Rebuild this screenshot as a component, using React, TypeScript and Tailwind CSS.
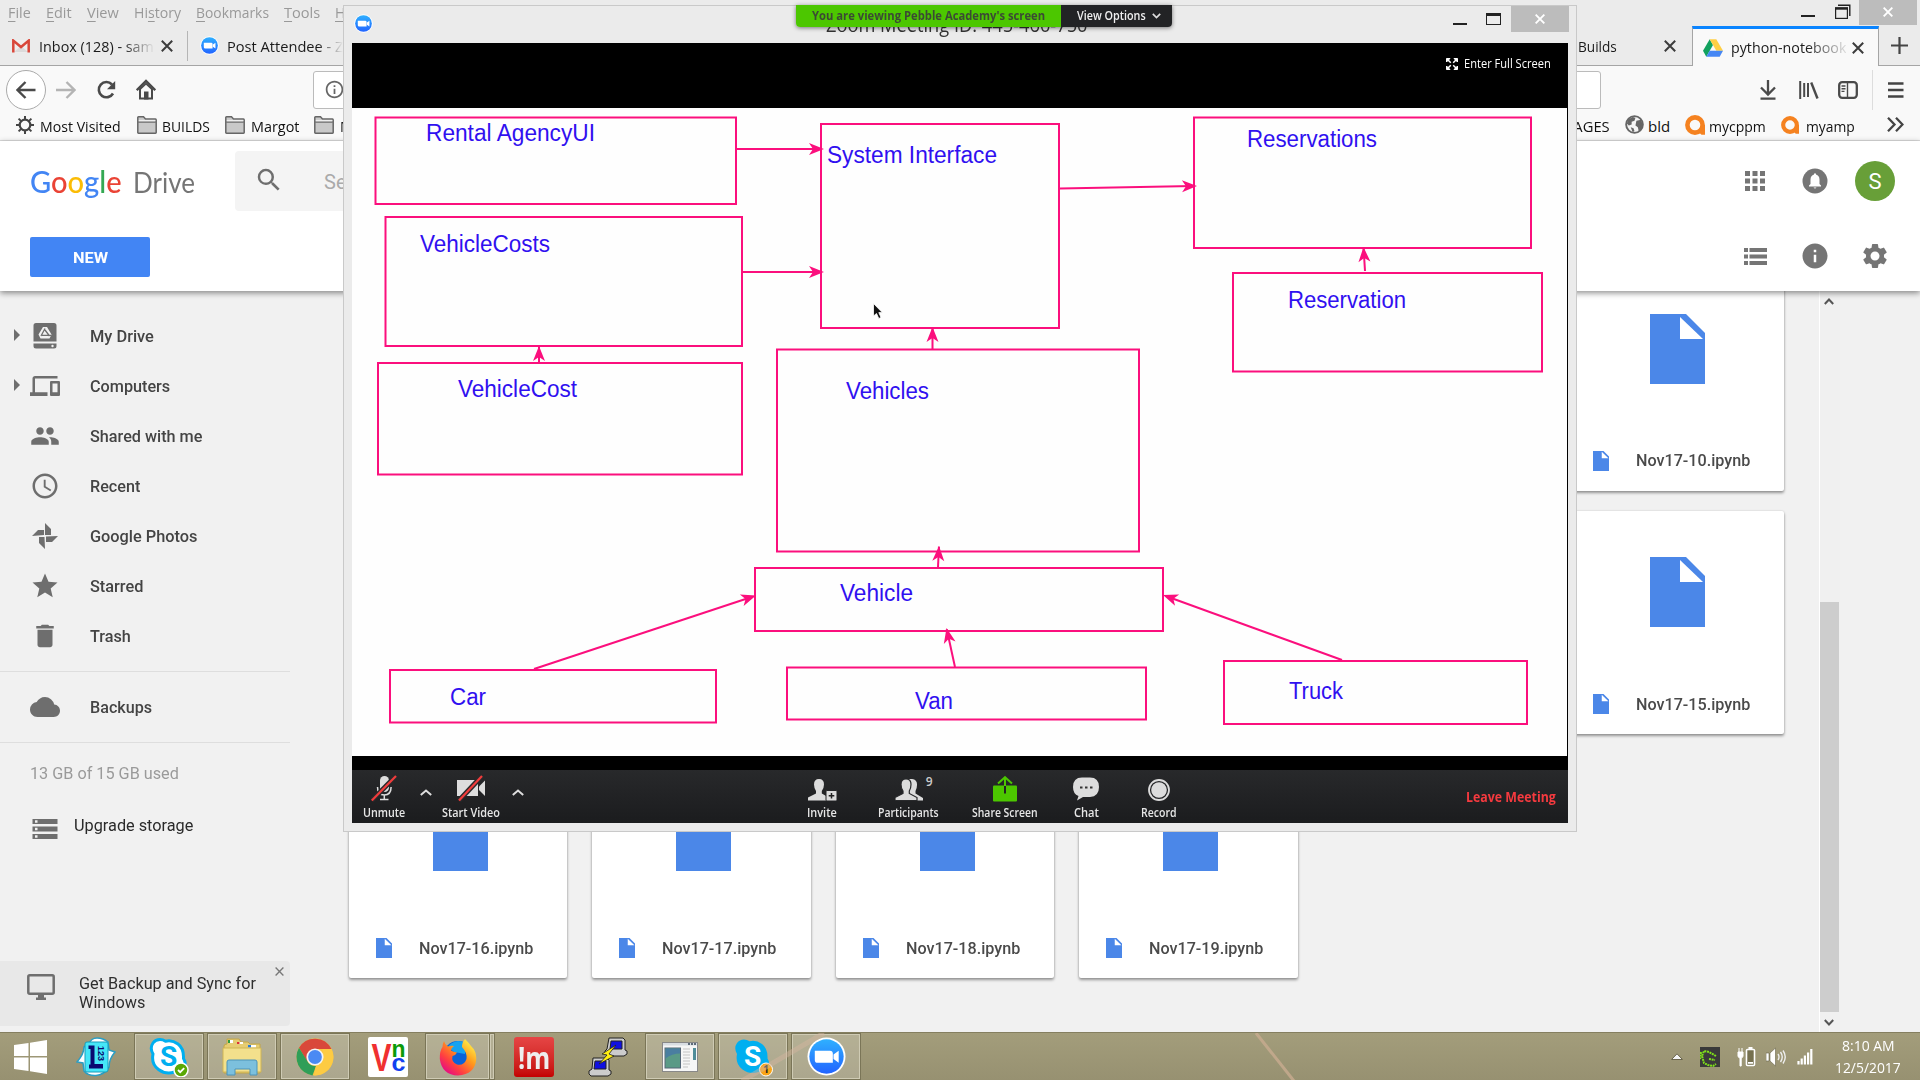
import { useLayoutEffect, useRef, type ReactNode } from "react";
import {
  MdDevices,
  MdPeople,
  MdAccessTime,
  MdStar,
  MdDelete,
  MdCloud,
  MdStorage,
  MdSearch,
  MdApps,
  MdInfo,
  MdSettings,
  MdInfoOutline,
} from "react-icons/md";

/* Single-line label whose text is condensed or widened to an exact width. */
function Fit({ w, className = "", children }: { w: number; className?: string; children: ReactNode }) {
  const ref = useRef<HTMLSpanElement>(null);
  useLayoutEffect(() => {
    const el = ref.current;
    if (!el) return;
    const apply = () => {
      el.style.transform = "none";
      const natural = el.offsetWidth;
      if (natural) el.style.transform = `scaleX(${w / natural})`;
    };
    apply();
    document.fonts?.ready.then(apply);
  }, [w]);
  return (
    <span className={`block shrink-0 whitespace-nowrap ${className}`} style={{ width: w }}>
      <span ref={ref} className="inline-block origin-left">
        {children}
      </span>
    </span>
  );
}

function Cross({ size = 12, stroke = "#3c3c3c", width = 2 }: { size?: number; stroke?: string; width?: number }) {
  return (
    <svg width={size} height={size} viewBox="0 0 12 12" className="shrink-0">
      <path d="M.8.8 11.2 11.2M11.2.8.8 11.2" stroke={stroke} strokeWidth={width} fill="none" />
    </svg>
  );
}

function ZoomLogo({ size }: { size: number }) {
  return (
    <svg width={size} height={size} viewBox="0 0 40 40" className="shrink-0">
      <defs>
        <linearGradient id="zg" x1="0" y1="0" x2="0" y2="1">
          <stop offset="0" stopColor="#2fb0ff" />
          <stop offset="1" stopColor="#2264ff" />
        </linearGradient>
      </defs>
      <circle cx="20" cy="20" r="19.500" fill="#fff" />
      <circle cx="20" cy="20" r="17.600" fill="url(#zg)" />
      <path d="M8 14h15.500a3 3 0 0 1 3 3v9.500H11a3 3 0 0 1-3-3zM27.200 18l5.300-4v12.500l-5.300-4z" fill="#fff" />
    </svg>
  );
}

function GmailLogo() {
  return (
    <svg width="18" height="14" viewBox="0 0 18 14" className="shrink-0">
      <rect x="1" y="1" width="16" height="12.500" fill="#f0eeee" />
      <path d="M2 13 9 7l7 6z" fill="#dcdada" />
      <path d="M1.300 13.500V1.600L9 8l7.700-6.400v11.900" stroke="#d9473a" strokeWidth="2.500" fill="none" />
    </svg>
  );
}

function DriveLogo() {
  return (
    <svg width="20" height="18" viewBox="0 0 20 17.500" className="shrink-0">
      <path d="M6.700 0 0 11.500l3.300 6L10 5.800z" fill="#11a15e" />
      <path d="M6.700 0h6.600L20 11.500h-6.700z" fill="#ffcf44" />
      <path d="M3.300 17.500 6.600 11.500H20l-3.300 6z" fill="#4687f4" />
    </svg>
  );
}

function Folder() {
  return (
    <svg width="20" height="18" viewBox="0 0 20 18" className="shrink-0">
      <path d="M.8 16.500V1.500Q.8.8 1.500.8H6.500L8.500 3H18.500Q19.200 3 19.200 4V16.500Q19.200 17.200 18.500 17.200H1.500Q.8 17.200.8 16.500Z" fill="#c9c9c9" stroke="#666" strokeWidth="1.500" />
      <path d="M1 6.200H19" stroke="#777" strokeWidth="1.300" />
      <path d="M1.800 4.500H18.300" stroke="#eee" strokeWidth="1.200" />
    </svg>
  );
}

function ArubaLogo({ size }: { size: number }) {
  return (
    <svg width={size} height={size} viewBox="0 0 20 20" className="shrink-0">
      <circle cx="10" cy="10" r="7.600" fill="none" stroke="#f58220" strokeWidth="4.600" />
      <path d="M16 10h4v9.800h-3.500L13.500 17z" fill="#f58220" />
    </svg>
  );
}

function FileShape({ w, h }: { w: number; h: number }) {
  return (
    <svg width={w} height={h} viewBox="0 0 55 70" preserveAspectRatio="none" className="shrink-0">
      <path d="M0 0H36L55 19V70H0Z" fill="#4b87e8" />
      <path d="M30 3V25H53Z" fill="#fff" />
    </svg>
  );
}

/* ------------------------------------------------------------------ Browser */

function MenuBar() {
  const items: [number, ReactNode][] = [
    [23, <><u>F</u>ile</>],
    [26, <><u>E</u>dit</>],
    [32, <><u>V</u>iew</>],
    [47, <>Hi<u>s</u>tory</>],
    [73, <><u>B</u>ookmarks</>],
    [36, <><u>T</u>ools</>],
    [30, <><u>H</u>elp</>],
  ];
  return (
    <div className="flex h-[26px] shrink-0 items-start gap-[15px] pl-2">
      {items.map(([w, label], i) => (
        <Fit key={i} w={w} className="text-[15px] leading-[25px] text-[#999] [&_u]:underline-offset-[3px]">
          {label}
        </Fit>
      ))}
      <div className="ml-auto flex items-start">
        <div className="mt-[15px] mr-[20px] h-[2px] w-[14px] bg-[#222]" />
        <svg width="16" height="16" viewBox="0 0 16 16" className="mt-[4px] mr-[8px]">
          <path d="M3 1.200H14.800V12" stroke="#222" strokeWidth="1.400" fill="none" />
          <rect x=".6" y="4" width="11.800" height="10.400" fill="none" stroke="#222" strokeWidth="1.200" />
          <path d="M0 4.500H13" stroke="#222" strokeWidth="2.400" />
        </svg>
        <div className="mr-[3px] flex h-[25px] w-[58px] items-center justify-center bg-[#bcbcbc] pb-[2px]">
          <Cross size={10} stroke="#fff" width={2.3} />
        </div>
      </div>
    </div>
  );
}

function TabStrip() {
  return (
    <div className="flex h-[40px] shrink-0 text-[15px] leading-[40px] text-[#1a1a1a]">
      <div className="flex flex-1 items-center border-b border-[#a5a5a5] pl-3">
        <GmailLogo />
        <div className="ml-[9px] w-[116px] overflow-hidden [mask-image:linear-gradient(to_right,#000_72%,transparent)]">
          <Fit w={115}>Inbox (128) - sam</Fit>
        </div>
        <span className="ml-[6px]">
          <Cross />
        </span>
        <div className="ml-[14px] h-[30px] w-px bg-[#b5b5b5]" />
        <span className="ml-[12px]">
          <ZoomLogo size={19} />
        </span>
        <div className="ml-[8px] [mask-image:linear-gradient(to_right,#000_78%,transparent)]">
          <Fit w={116}>Post Attendee - Z</Fit>
        </div>
        <Fit w={39} className="ml-auto">
          Builds
        </Fit>
        <span className="mr-[16px] ml-[47px]">
          <Cross />
        </span>
      </div>
      <div className="flex w-[187px] items-center border-x border-t-[3px] border-x-[#a5a5a5] border-t-[#0a84ff] bg-[#f9f9f9] pl-[10px] leading-[37px]">
        <DriveLogo />
        <div className="ml-[8px] [mask-image:linear-gradient(to_right,#000_65%,rgba(0,0,0,.12))]">
          <Fit w={115}>python-notebook</Fit>
        </div>
        <span className="ml-[6px]">
          <Cross />
        </span>
      </div>
      <div className="flex w-[41px] items-center border-b border-[#a5a5a5] pl-[12px]">
        <svg width="17" height="17" viewBox="0 0 17 17">
          <path d="M8.500 0V17M0 8.500H17" stroke="#444" strokeWidth="2.200" />
        </svg>
      </div>
    </div>
  );
}

function NavBar() {
  return (
    <div className="flex h-[46px] shrink-0 items-center bg-[#f9f9f9] pt-px">
      <div className="ml-[6px] flex size-[40px] items-center justify-center rounded-full border border-[#aaa] bg-white">
        <svg width="20" height="18" viewBox="0 0 20 18">
          <path d="M19.500 9H2M9.500 1 1.500 9l8 8" stroke="#4a4a4a" strokeWidth="2.400" fill="none" />
        </svg>
      </div>
      <svg width="20" height="18" viewBox="0 0 20 18" className="ml-[10px]">
        <path d="M0 9H18M10.500 1l8 8-8 8" stroke="#b4b4b4" strokeWidth="2.400" fill="none" />
      </svg>
      <svg width="20" height="20" viewBox="0 0 20 20" className="ml-[20px]">
        <path d="M16 4.500A7.600 7.600 0 1 0 17 13.500" stroke="#4a4a4a" strokeWidth="2.600" fill="none" />
        <path d="M19.200 1v8.200H11z" fill="#4a4a4a" />
      </svg>
      <svg width="20" height="21" viewBox="0 0 20 21" className="ml-[20px]">
        <path d="M.8 11.200 10 2l9.200 9.200" stroke="#4a4a4a" strokeWidth="2.300" fill="none" />
        <path d="M3 10 10 3.500 17 10v10.500H3z" fill="#4a4a4a" />
        <path d="M5 10.500 10 5.800l5 4.700V18.500H5z" fill="#f9f9f9" />
        <path d="M8 20.500v-8h4.500v8z" fill="#4a4a4a" />
      </svg>
      <div className="ml-[157px] flex h-[38px] w-[1288px] items-center rounded-[3px] border border-[#bbb] bg-white pl-[10px]">
        <MdInfoOutline size={21} color="#666" />
      </div>
      <svg width="16" height="20" viewBox="0 0 16 20" className="ml-[159px]">
        <path d="M8 0V14M1 7.500l7 7 7-7M.5 18.700H15.500" stroke="#4a4a4a" strokeWidth="2.300" fill="none" />
      </svg>
      <svg width="20" height="18" viewBox="0 0 20 18" className="ml-[23px]">
        <path d="M1.200 0V18M5.200 2V16M9 2V16" stroke="#4a4a4a" strokeWidth="2" />
        <path d="M12.200 1.500 18.500 17.500" stroke="#4a4a4a" strokeWidth="2.400" />
      </svg>
      <svg width="20" height="18" viewBox="0 0 20 18" className="ml-[19px]">
        <rect x="1.200" y="1.200" width="17.600" height="15.600" rx="3" fill="none" stroke="#4a4a4a" strokeWidth="2.300" />
        <path d="M9.500 1V17M3.500 5H7.500M3.500 7.700H7.500M3.500 10.400H6.500" stroke="#4a4a4a" strokeWidth="1.400" />
      </svg>
      <div className="ml-[14px] h-[40px] w-px bg-[#ddd]" />
      <svg width="16" height="16" viewBox="0 0 16 16" className="ml-[15px]">
        <path d="M0 1.500H15.500M0 8H15.500M0 14.500H15.500" stroke="#444" strokeWidth="2.300" />
      </svg>
    </div>
  );
}

function BookmarksBar() {
  return (
    <div className="flex h-[29px] shrink-0 items-start border-b border-[#dcdcdc] bg-[#f9f9f9] text-[15px] leading-[28px] text-[#111]">
      <svg width="18" height="18" viewBox="0 0 18 18" className="mt-[4px] ml-[16px] shrink-0">
        <circle cx="9" cy="9" r="5.300" fill="none" stroke="#444" strokeWidth="2.200" />
        <path d="M9 0V4M9 14V18M0 9H4M14 9H18M2.600 2.600 5.400 5.400M12.600 12.600 15.400 15.400M15.400 2.600 12.600 5.400M5.400 12.600 2.600 15.400" stroke="#444" strokeWidth="2" />
      </svg>
      <Fit w={81} className="ml-[6px]">Most Visited</Fit>
      <span className="mt-[4px] ml-[16px]"><Folder /></span>
      <Fit w={48} className="ml-[5px]">BUILDS</Fit>
      <span className="mt-[4px] ml-[15px]"><Folder /></span>
      <Fit w={48} className="ml-[6px]">Margot</Fit>
      <span className="mt-[4px] ml-[15px]"><Folder /></span>
      <Fit w={13} className="ml-[6px]">M</Fit>
      <Fit w={54} className="mr-[15px] ml-auto">IMAGES</Fit>
      <svg width="19" height="19" viewBox="0 0 20 20" className="mt-[3px]">
        <circle cx="10" cy="10" r="8.800" fill="#f4f4f4" stroke="#666" strokeWidth="2" />
        <path d="M3 5 8 2l3 1-1 3-3 1v3l-3 1-2-2zM12 6l5-1 1.500 5-1 5-3 2-1-4-2.500-2zM6 13l3 1 1 3-2 1z" fill="#666" />
      </svg>
      <Fit w={22} className="ml-[4px]">bld</Fit>
      <span className="mt-[3px] ml-[15px]"><ArubaLogo size={20} /></span>
      <Fit w={57} className="ml-[4px]">mycppm</Fit>
      <span className="mt-[4px] ml-[15px]"><ArubaLogo size={18} /></span>
      <Fit w={49} className="ml-[7px]">myamp</Fit>
      <svg width="17" height="15" viewBox="0 0 17 15" className="mt-[5px] mr-[16px] ml-[32px]">
        <path d="M1 .8 7.500 7.500 1 14.200M9 .8l6.500 6.700L9 14.200" stroke="#444" strokeWidth="2.300" fill="none" />
      </svg>
    </div>
  );
}

function DriveHeader() {
  return (
    <div className="relative z-10 flex h-[150px] shrink-0 justify-between bg-white font-[Roboto] shadow-[0_2px_6px_rgba(0,0,0,0.45)]">
      <div>
        <div className="mt-[10px] flex h-[60px] pl-[30px]">
          <Fit w={92} className="font-[Lato] text-[31px] leading-[60px] font-medium">
            <span className="text-[#4285f4]">G</span>
            <span className="text-[#ea4335]">o</span>
            <span className="text-[#fbbc05]">o</span>
            <span className="text-[#4285f4]">g</span>
            <span className="text-[#34a853]">l</span>
            <span className="text-[#ea4335]">e</span>
          </Fit>
          <Fit w={62} className="ml-[11px] font-[Lato] text-[28.500px] leading-[62px] text-[#757575]">Drive</Fit>
          <div className="ml-[40px] flex h-[60px] w-[900px] rounded bg-[#f4f4f4] pl-[19px]">
            <MdSearch size={30} color="#6e6e6e" className="mt-[14px]" />
            <span className="ml-[40px] text-[20px] leading-[62px] text-[#aaa]">Search Drive</span>
          </div>
        </div>
        <div className="mt-[26px] ml-[30px] flex h-[40px] w-[120px] items-center justify-center rounded-[2px] bg-[#4285f4] pt-[2px] text-[15px] font-bold text-white">
          <Fit w={35}>NEW</Fit>
        </div>
      </div>
      <div className="mr-[25px] grid h-[150px] grid-cols-[40px_40px_40px] grid-rows-[80px_70px] place-items-center gap-x-[20px]">
        <MdApps size={30} color="#757575" />
        <svg width="26" height="26" viewBox="0 0 26 26">
          <circle cx="13" cy="13" r="12.500" fill="#757575" />
          <path d="M7 18.500v-1l1.500-1.500v-4.500Q8.700 7.500 12 6.600V5.500h2v1.100q3.300.9 3.500 4.900V16l1.500 1.500v1zM11.500 19.500h3q-1.500 2-3 0z" fill="#fff" />
        </svg>
        <div className="flex size-[40px] items-center justify-center rounded-full bg-[#689f38] pt-px text-[22px] text-white">S</div>
        <svg width="23" height="17" viewBox="0 0 23 17">
          <path d="M0 2H4M5.500 2H23M0 8.500H4M5.500 8.500H23M0 15H4M5.500 15H23" stroke="#757575" strokeWidth="4" />
        </svg>
        <MdInfo size={30} color="#757575" />
        <MdSettings size={30} color="#757575" />
      </div>
    </div>
  );
}

function MyDriveIcon() {
  return (
    <svg width="24" height="26" viewBox="0 0 24 26">
      <path d="M3 0H21Q23.500 0 23.500 2.500V18.500H.5V2.500Q.5 0 3 0ZM.5 20.500H23.500V23Q23.500 25.500 21 25.500H3Q.5 25.500.5 23Z" fill="#6e6e6e" />
      <path d="M10 4h4l4.500 7.500-2 4h-9l-2-4z" fill="#f1f1f1" />
      <path d="M12 5.500 8 13M12 7l4.500 6M9 12.300h9" stroke="#6e6e6e" strokeWidth="1.300" />
      <circle cx="19.500" cy="23" r="1.200" fill="#f1f1f1" />
    </svg>
  );
}

function PinwheelIcon() {
  return (
    <svg width="26" height="26" viewBox="0 0 26 26" fill="#6e6e6e">
      <path d="M13 0 19 6V12H13ZM26 13 20 19H14V13.500ZM13 26 7 20V14H12.500ZM0 13 6 7H12V12Z" />
    </svg>
  );
}

function MonitorIcon() {
  return (
    <svg width="28" height="26" viewBox="0 0 28 26" className="mt-[13px] shrink-0">
      <rect x="1.300" y="1.300" width="25.400" height="18.400" rx="1.500" fill="none" stroke="#6e6e6e" strokeWidth="2.500" />
      <path d="M11 20.500H17V23.500H19V26H9V23.500H11Z" fill="#6e6e6e" />
    </svg>
  );
}

function SideItem({ icon, label, w, arrow = false }: { icon: ReactNode; label: string; w: number; arrow?: boolean }) {
  return (
    <div className="flex h-[50px] items-center">
      <svg width="6" height="12" viewBox="0 0 6 12" className={`-mt-[3px] ml-[14px] ${arrow ? "" : "invisible"}`}>
        <path d="M0 0 6 6 0 12Z" fill="#6e6e6e" />
      </svg>
      <div className="ml-[10px] flex w-[30px] justify-center">{icon}</div>
      <Fit w={w} className="ml-[30px] pt-px text-[16px] font-medium text-[#444]">
        {label}
      </Fit>
    </div>
  );
}

function Sidebar() {
  const c = "#6e6e6e";
  return (
    <div className="flex w-[290px] shrink-0 flex-col pt-[20px]">
      <SideItem arrow icon={<MyDriveIcon />} label="My Drive" w={63.500} />
      <SideItem arrow icon={<MdDevices size={30} color={c} />} label="Computers" w={80} />
      <SideItem icon={<MdPeople size={30} color={c} />} label="Shared with me" w={112.500} />
      <SideItem icon={<MdAccessTime size={30} color={c} />} label="Recent" w={50.500} />
      <SideItem icon={<PinwheelIcon />} label="Google Photos" w={107} />
      <SideItem icon={<MdStar size={30} color={c} />} label="Starred" w={53} />
      <SideItem icon={<MdDelete size={30} color={c} />} label="Trash" w={40.500} />
      <div className="mt-[10px] h-px bg-[#dedede]" />
      <div className="mt-[10px] mb-[10px]">
        <SideItem icon={<MdCloud size={30} color={c} />} label="Backups" w={62.500} />
      </div>
      <div className="h-px bg-[#dedede]" />
      <Fit w={149} className="mt-[19px] ml-[30px] text-[16px] leading-[24px] text-[#9a9a9a]">
        13 GB of 15 GB used
      </Fit>
      <div className="mt-[27px] flex h-[30px] items-start pl-[30px]">
        <MdStorage size={30} color={c} className="mt-px" />
        <Fit w={119} className="ml-[14px] text-[16px] leading-[26px] text-[#2a2a2a]">
          Upgrade storage
        </Fit>
      </div>
      <div className="mt-auto mb-[6px] flex h-[65px] rounded-r bg-[#e8e8e8] pl-[27px]">
        <MonitorIcon />
        <div className="mt-[13px] ml-[24px] text-[16px] leading-[19px] text-[#2f2f2f]">
          <Fit w={176.500}>Get Backup and Sync for</Fit>
          <Fit w={66}>Windows</Fit>
        </div>
        <span className="mt-[6px] ml-[19px] h-[9px] leading-none">
          <Cross size={9} stroke="#777" width={1.8} />
        </span>
      </div>
    </div>
  );
}

function FileCard({ n, labelClass = "" }: { n: number; labelClass?: string }) {
  return (
    <div className="flex h-[223px] flex-col rounded-[2px] bg-white pt-[46px] shadow-[0_2px_3px_rgba(0,0,0,0.38),0_0_2px_rgba(0,0,0,0.15)]">
      <div className="ml-[84px]">
        <FileShape w={55} h={70} />
      </div>
      <div className="mt-auto mb-[20px] flex h-[20px] w-full items-start pl-[27px]">
        <FileShape w={16} h={20} />
        <Fit w={114} className={`ml-[27px] text-[16px] leading-[20px] font-medium text-[#4a4a4a] ${labelClass}`}>
          Nov17-{n}.ipynb
        </Fit>
      </div>
    </div>
  );
}

function DriveBody() {
  return (
    <div className="flex min-h-0 flex-1 overflow-hidden bg-[#f1f1f1] font-[Roboto]">
      <Sidebar />
      <div className="-mt-[23px] ml-[59px] grid h-[710px] w-[1435.400px] shrink-0 grid-cols-[repeat(6,218.400px)] grid-rows-[223px_224px_223px] gap-x-[25px] gap-y-[20px]">
        <div className="col-start-6"><FileCard n={10} /></div>
        <div className="col-start-6"><FileCard n={15} labelClass="pt-px" /></div>
        <FileCard n={16} labelClass="pt-px" />
        <FileCard n={17} labelClass="pt-px" />
        <FileCard n={18} labelClass="pt-px" />
        <FileCard n={19} labelClass="pt-px" />
      </div>
      <div className="ml-[34.600px] flex w-[21px] shrink-0 flex-col items-center border-l-[1.500px] border-white bg-[#f0f0f0] pr-px">
        <svg width="10" height="7" viewBox="0 0 10 7" className="mt-[7px] shrink-0">
          <path d="M.8 6 5 1.500 9.200 6" stroke="#555" strokeWidth="2" fill="none" />
        </svg>
        <div className="mt-auto h-[410px] w-full bg-[#cdcdcd]" />
        <svg width="10" height="7" viewBox="0 0 10 7" className="mt-[7px] mb-[6px] shrink-0">
          <path d="M.8 1 5 5.500 9.200 1" stroke="#555" strokeWidth="2" fill="none" />
        </svg>
      </div>
    </div>
  );
}

/* -------------------------------------------------------------- Zoom window */

const PINK = "#fb0f7d";
const boxes: [number, number, number, number][] = [
  [375.5, 117.5, 736, 204],
  [385.5, 217, 742, 346],
  [378, 363, 742, 474.5],
  [821, 124, 1059, 328],
  [1194, 117.5, 1531, 248],
  [1233, 273, 1542, 371.5],
  [777, 349.5, 1139, 551.5],
  [755, 568, 1163, 631],
  [390, 670, 716, 722.5],
  [787, 667.5, 1146, 719.5],
  [1224, 661, 1527, 724],
];
const arrows: [number, number, number, number][] = [
  [736, 149, 824, 149],
  [742, 272, 824, 272],
  [1060, 188.5, 1197, 186],
  [1365, 271, 1363.5, 247],
  [539, 363, 539, 346],
  [932.5, 349, 932.5, 327],
  [938, 567, 939, 546],
  [534, 669, 756, 595.5],
  [955, 667, 946.5, 628],
  [1342, 660, 1163, 595],
];
const names: [string, number, number, number][] = [
  ["Rental AgencyUI", 426, 141, 169],
  ["System Interface", 827, 163, 170],
  ["Reservations", 1247, 147, 130],
  ["VehicleCosts", 420, 252, 130],
  ["Reservation", 1288, 308, 118],
  ["VehicleCost", 458, 397, 119],
  ["Vehicles", 846, 399, 83],
  ["Vehicle", 840, 601, 73],
  ["Car", 450, 705, 36],
  ["Van", 915, 709, 38],
  ["Truck", 1289, 699, 54],
];

function Diagram() {
  return (
    <svg width="1215" height="648" viewBox="352 108 1215 648" className="block bg-[#fefefe]">
      <g fill="none" stroke={PINK} strokeWidth="2">
        {boxes.map(([a, b, c, d], i) => (
          <rect key={i} x={a} y={b} width={c - a} height={d - b} />
        ))}
        {arrows.map(([a, b, c, d], i) => (
          <line key={i} x1={a} y1={b} x2={c - (c - a) * 0.03} y2={d - (d - b) * 0.03} />
        ))}
      </g>
      {arrows.map(([a, b, c, d], i) => (
        <path
          key={i}
          d="M0 0-15-6-11 0-15 6Z"
          fill={PINK}
          transform={`translate(${c} ${d}) rotate(${(Math.atan2(d - b, c - a) * 180) / Math.PI})`}
        />
      ))}
      <g fill="#3010f0" fontFamily="'Liberation Sans', Arial, sans-serif" fontSize="23.500">
        {names.map(([t, x, y, w]) => (
          <text key={t} x={x} y={y} textLength={w} lengthAdjust="spacingAndGlyphs">
            {t}
          </text>
        ))}
      </g>
      <path d="M873.500 303.500V316L876.500 313.500 878.800 318.500 881 317.500 878.800 312.600H882.300Z" fill="#111" stroke="#fff" strokeWidth=".8" />
    </svg>
  );
}

function Tool({ x, w, label, children }: { x: string; w: number; label: string; children: ReactNode }) {
  return (
    <div className={`flex flex-col items-center ${x}`}>
      <div className="flex h-[36px] items-center">{children}</div>
      <Fit w={w} className="text-[12px] leading-[14px] font-semibold text-[#e6e6e6]">
        {label}
      </Fit>
    </div>
  );
}

function Caret({ className }: { className: string }) {
  return (
    <svg width="12" height="7" viewBox="0 0 12 7" className={`mt-[19px] shrink-0 ${className}`}>
      <path d="M.8 6 6 1.500 11.200 6" stroke="#ddd" strokeWidth="2" fill="none" />
    </svg>
  );
}

function ZoomToolbar() {
  return (
    <div className="flex h-[53px] items-start bg-gradient-to-b from-[#28292b] to-[#1b1c1e]">
      <Tool x="ml-[11px]" w={42} label="Unmute">
        <svg width="26" height="28" viewBox="0 0 26 28">
          <rect x="9" y="2" width="9" height="16" rx="4.500" fill="#ddd" />
          <path d="M6.500 13q0 8 6.800 8t6.800-8M13.300 21v4M9 25.500h8.500" stroke="#ddd" strokeWidth="1.500" fill="none" />
          <path d="M.8 26.500 25 2" stroke="#28292b" strokeWidth="5" />
          <path d="M.8 26.500 25 2" stroke="#f13c3c" strokeWidth="2.200" />
        </svg>
      </Tool>
      <Caret className="ml-[15px]" />
      <Tool x="ml-[10px]" w={58} label="Start Video">
        <svg width="30" height="28" viewBox="0 0 30 28">
          <rect x="1" y="6" width="21" height="16" fill="#ddd" />
          <path d="M23 12.500 29 6.500V22L23 16Z" fill="#ddd" />
          <path d="M3 26.500 26 2" stroke="#28292b" strokeWidth="5" />
          <path d="M3 26.500 26 2" stroke="#f13c3c" strokeWidth="2.200" />
        </svg>
      </Tool>
      <Caret className="ml-[12px]" />
      <Tool x="ml-[283px]" w={30} label="Invite">
        <svg width="29" height="22" viewBox="0 0 29 22" className="mt-[3px]">
          <path d="M6 5.500Q6 0 11 0T16 5.500Q16 9 13.800 12V14.500L19 17.500V21.500H0V18.500L8 14.500V12Q6 9 6 5.500Z" fill="#dcdcdc" />
          <rect x="18" y="11.500" width="11" height="10.500" rx="1" fill="#dcdcdc" stroke="#242527" strokeWidth="1" />
          <path d="M23.500 14V19.500M20.700 16.800H26.300" stroke="#222" strokeWidth="1.500" />
        </svg>
      </Tool>
      <Tool x="ml-[41px]" w={61} label="Participants">
        <div className="relative mt-[3px]">
          <svg width="28" height="22" viewBox="0 0 28 22">
            <path d="M13 0Q22.500-1 22 6 22 9 20.500 12V14.500L28 19V21.500H13Z" fill="#dcdcdc" />
            <path d="M6 5.500Q6 0 11 0T16 5.500Q16 9 14.300 12V14.500L22 18.500V21.500H0V18.500L8 14.500V12Q6 9 6 5.500Z" fill="#dcdcdc" stroke="#28292b" strokeWidth="1.200" />
          </svg>
          <span className="absolute -top-[3px] -right-[10px] text-[12px] leading-none font-semibold text-[#ccc]">9</span>
        </div>
      </Tool>
      <Tool x="ml-[33px]" w={66} label="Share Screen">
        <svg width="24" height="26" viewBox="0 0 24 26" className="mt-px">
          <rect y="9.500" width="24" height="16" rx="1" fill="#4cc700" />
          <path d="M12 9V17.500" stroke="#222" strokeWidth="2" />
          <path d="M12 10V2M5 7.500 12 1.200 19 7.500" stroke="#4cc700" strokeWidth="2" fill="none" />
        </svg>
      </Tool>
      <Tool x="ml-[35px]" w={25} label="Chat">
        <svg width="26" height="24" viewBox="0 0 26 24" className="mt-[2px]">
          <path d="M9 .5H17Q26 .5 26 10T17 20H10L4 23.500 5.500 19Q0 17 0 10 0 .5 9 .5Z" fill="#dcdcdc" />
          <path d="M7 10.500h2.500M12 10.500h2.500M17 10.500h2.500" stroke="#333" strokeWidth="2" />
        </svg>
      </Tool>
      <Tool x="ml-[42px]" w={36} label="Record">
        <svg width="22" height="22" viewBox="0 0 22 22" className="mt-[4px]">
          <circle cx="11" cy="11" r="10" fill="none" stroke="#dcdcdc" strokeWidth="1.800" />
          <circle cx="11" cy="11" r="7.800" fill="#dcdcdc" />
        </svg>
      </Tool>
      <Fit w={90} className="mr-[12px] ml-auto text-[14px] leading-[54px] font-bold text-[#f53a3f]">
        Leave Meeting
      </Fit>
    </div>
  );
}

function ZoomWindow() {
  return (
    <div className="absolute top-[5px] left-[343px] z-20 flex h-[827px] w-[1234px] flex-col border border-[#c9c9c9] bg-[#ebebeb]">
      <div className="flex h-[37px] shrink-0 items-start">
        <span className="mt-[8px] ml-[10px]">
          <ZoomLogo size={19} />
        </span>
        <Fit w={262} className="ml-[453px] text-[20px] leading-[37px] text-[#333]">
          Zoom Meeting ID: 445-460-750
        </Fit>
        <div className="mt-[17px] ml-auto h-[2px] w-[14px] bg-[#222]" />
        <div className="mt-[7px] ml-[19px] h-[12px] w-[15px] border border-t-[3px] border-[#222]" />
        <div className="mr-[7px] ml-[10px] flex h-[26px] w-[58px] items-center justify-center bg-[#bcbcbc] pb-px">
          <Cross size={10} stroke="#fff" width={2.3} />
        </div>
      </div>
      <div className="mx-[8px] w-[1215.500px] shrink-0 bg-black">
        <div className="flex h-[65px] items-start justify-end pr-[17px] text-white">
          <svg width="12" height="12" viewBox="0 0 12 12" className="mt-[15px]" fill="#fff" stroke="#fff">
            <path d="M.5 4V.5H4ZM8 .500H11.500V4ZM11.500 8V11.500H8ZM4 11.500H.5V8Z" />
            <path d="M1 1 4.800 4.800M11 1 7.200 4.800M11 11 7.200 7.200M1 11 4.800 7.200" strokeWidth="1.500" />
          </svg>
          <Fit w={87} className="ml-[6px] text-[12.500px] leading-[42px]">
            Enter Full Screen
          </Fit>
        </div>
        <Diagram />
        <div className="h-[14px]" />
        <ZoomToolbar />
      </div>
    </div>
  );
}

function SharingBanner() {
  return (
    <div className="absolute top-[5px] left-[796px] z-30 flex h-[22px] overflow-hidden rounded-b-[4px] text-[12.500px] leading-[21px] shadow-[0_1px_4px_rgba(0,0,0,0.5)]">
      <div className="w-[265px] bg-[#4cc700] pl-[16px] font-bold text-[#3b4a34]">
        <Fit w={233}>You are viewing Pebble Academy's screen</Fit>
      </div>
      <div className="flex w-[111px] items-center bg-[#222325] pb-px pl-[16px] font-semibold text-[#f0f0f0]">
        <Fit w={69}>View Options</Fit>
        <svg width="9" height="6" viewBox="0 0 9 6" className="ml-[6px]">
          <path d="M.8.8 4.500 4.500 8.200.8" stroke="#ddd" strokeWidth="1.700" fill="none" />
        </svg>
      </div>
    </div>
  );
}

/* ------------------------------------------------------------------ Taskbar */

function TaskButton({ children, className = "w-[70px]" }: { children?: ReactNode; className?: string }) {
  return (
    <div className={`h-[47px] border border-[#7a7557] ${className}`}>
      <div className="flex h-full items-center justify-center border border-[#cfcbb4] bg-white/20">{children}</div>
    </div>
  );
}

function SkypeIcon({ light, children }: { light?: boolean; children: ReactNode }) {
  return (
    <svg width="40" height="40" viewBox="0 0 40 40">
      <g fill={light ? "#fff" : "#00aff0"} stroke="#00aff0" strokeWidth={light ? 3 : 0}>
        <path d="M11 2.500Q14 2.500 16.500 4.200 23 2.500 29 7T34.500 21.500Q37.500 26 35 31T25.500 35Q17 38 9.500 32.500T4 17Q.5 11 4 6 6.500 2.500 11 2.500Z" />
      </g>
      <text x="19.500" y="29" textAnchor="middle" fontSize="28" fontWeight="700" fontFamily="Roboto, sans-serif" fill={light ? "#00aff0" : "#fff"}>S</text>
      {children}
    </svg>
  );
}

function ChromeIcon() {
  return (
    <svg width="38" height="38" viewBox="0 0 38 38">
      <circle cx="19" cy="19" r="18.500" fill="#f9c440" />
      <path d="M3 9.700A18.500 18.500 0 0 1 35.500 11H19L11 23.500Z" fill="#d9483b" />
      <path d="M3 9.700 11.500 23.500Q14 28 20 28L16.500 37.400A18.500 18.500 0 0 1 3 9.700Z" fill="#2f9e58" />
      <path d="M20 28 27 22 26.500 11H35.500A18.500 18.500 0 0 1 18 37.500Z" fill="#fdcb43" />
      <circle cx="19" cy="19" r="8.600" fill="#f4f4f4" />
      <circle cx="19" cy="19" r="6.900" fill="#4a8af4" />
    </svg>
  );
}

function FirefoxIcon() {
  return (
    <svg width="38" height="38" viewBox="0 0 38 38">
      <defs>
        <linearGradient id="fx" x1=".9" y1=".1" x2=".2" y2=".9">
          <stop offset="0" stopColor="#fff14a" />
          <stop offset=".4" stopColor="#ff9a1c" />
          <stop offset=".75" stopColor="#ff4040" />
          <stop offset="1" stopColor="#e8127c" />
        </linearGradient>
      </defs>
      <circle cx="19" cy="18" r="15" fill="#0a62d8" />
      <path d="M19 3Q12 4 9 9L15 14 26 16V5Q23 3 19 3Z" fill="#16a3f0" />
      <path d="M5 3Q6 7 9 8.500 12 7.500 15 8 12 10 12 12.500 14 14 18 14.500 17 17 13.500 18 12 24 18 26.500 25 28 27.500 21 28.500 15 23 9 23 4 26 1 30 5 32 8 37.500 13 37.300 21 36 36.500 19 37.500 3 37 .8 21 .5 13 3.500 9 3.500 6 5 3Z" fill="url(#fx)" />
    </svg>
  );
}

function Taskbar() {
  return (
    <div className="relative flex h-[48px] shrink-0 overflow-hidden border-t border-[#857f60] bg-gradient-to-b from-[#a39d7b] to-[#979171]">
      <svg width="700" height="48" viewBox="700 0 700 48" className="absolute top-0 left-[700px]">
        <path d="M824 0 742 48" stroke="#d6b6a0" strokeWidth="5" opacity=".45" />
        <path d="M1256 0 1294 48" stroke="#c9ac90" strokeWidth="3" opacity=".8" />
      </svg>
      <div className="flex w-[60px] items-center justify-center">
        <svg width="33" height="34" viewBox="0 0 33 34" fill="#fff">
          <path d="M0 5 14.500 3V16H0ZM16 2.800 33 0V16H16ZM0 17.500H14.500V31L0 29ZM16 17.500H33V34L16 31.300Z" />
        </svg>
      </div>
      <div className="flex w-[72px] items-center justify-center">
        <svg width="40" height="40" viewBox="0 0 40 40">
          <path d="M13 7Q15 1 21 1T32 5L33 13 39 15Q33 22 33 30 28 38 20 38.500 12 39 8 34L7 26 1 25Q8 17 8 10Z" fill="#fff" stroke="#2a9ec4" strokeWidth="1.500" />
          <rect x="9" y="5" width="23" height="30" rx="2" fill="#45e6f8" stroke="#1a9ab8" />
          <path d="M12.500 8.500H18.500V27H27V31.500H13V27.500H14.500V12H12.500Z" fill="#0a0a70" />
          <text transform="translate(21.500 9) rotate(90)" fontSize="9" fontWeight="700" fontFamily="Liberation Sans, sans-serif" fill="#0a0a70">123</text>
        </svg>
      </div>
      <div className="ml-[2px] flex gap-[3px]">
        <TaskButton>
          <SkypeIcon light>
            <circle cx="32" cy="33" r="7" fill="#5aa804" stroke="#fff" strokeWidth="1.500" />
            <path d="M29 33l2.200 2.200 4-4" stroke="#fff" strokeWidth="1.800" fill="none" />
          </SkypeIcon>
        </TaskButton>
        <TaskButton>
          <svg width="40" height="38" viewBox="0 0 40 38">
            <path d="M5 1H17L19 4H26L28 6H38V35H2V8Q2 6 5 6Z" fill="#e6cd72" stroke="#c2a648" />
            <path d="M6 2h5v3H6zM15 4h6v2h-6zM26 7h8v2.500h-8z" fill="#fff" />
            <path d="M6 2h2v3H6z" fill="#2c9d3f" />
            <path d="M15 4h2.500v2H15z" fill="#d33" />
            <path d="M26 7h3v2.500h-3z" fill="#2d7cd6" />
            <path d="M1 10H39V34H1Z" fill="#f3e08c" stroke="#d0b555" />
            <path d="M5 37V24Q5 22 7 22H33Q35 22 35 24V37H28V31H13V37Z" fill="#7cc0dd" stroke="#4c94b8" />
          </svg>
        </TaskButton>
        <TaskButton>
          <ChromeIcon />
        </TaskButton>
      </div>
      <div className="flex w-[75px] items-center justify-center">
        <svg width="40" height="40" viewBox="0 0 40 40" className="overflow-visible">
          <rect width="40" height="40" rx="2" fill="#fff" />
          <g fontFamily="Liberation Sans, sans-serif" fontWeight="700">
            <text x="3.500" y="34" fontSize="38" textLength="20" lengthAdjust="spacingAndGlyphs" fill="#f03030">V</text>
            <text x="23.500" y="19.500" fontSize="24" textLength="14" lengthAdjust="spacingAndGlyphs" fill="#0a9a0a">n</text>
            <text x="23.500" y="34" fontSize="24" textLength="14" lengthAdjust="spacingAndGlyphs" fill="#1240f0">c</text>
          </g>
        </svg>
      </div>
      <div className="flex">
        <TaskButton className="w-[65px]">
          <FirefoxIcon />
        </TaskButton>
        <TaskButton className="w-[5px] border-l-0" />
      </div>
      <div className="flex w-[77px] items-center justify-center">
        <div className="flex size-[40px] items-center justify-center rounded-[3px] bg-gradient-to-b from-[#e64545] to-[#c40000]">
          <Fit w={32} className="text-[31px] leading-[38px] font-bold text-[#eee]">!m</Fit>
        </div>
      </div>
      <div className="flex w-[72px] items-center justify-center">
        <svg width="40" height="40" viewBox="0 0 40 40" stroke="#222">
          <path d="M21 1H35L37 3V13L39 14V17L36 19H20L17 17V14L19 12Z" fill="#ccc" />
          <path d="M23 4H34V12H22Z" fill="#1010e0" />
          <path d="M5 21H19L21 23V33L23 34V37L20 39H3L1 37V34L4 32Z" fill="#ccc" />
          <path d="M7 24H18V32H6Z" fill="#1010e0" />
          <path d="M28 8 14 17 19 18 11 27 26 19 21 17Z" fill="#ffee10" strokeWidth=".8" />
        </svg>
      </div>
      <div className="ml-[1px] flex gap-[3px]">
        <TaskButton>
          <svg width="36" height="30" viewBox="0 0 36 30">
            <rect x=".5" y=".5" width="35" height="29" fill="#f6f6f6" stroke="#888" />
            <path d="M1 1H35V3.500H1Z" fill="#d8dde2" />
            <path d="M26 2h2M29 2h2M32 2h2" stroke="#345" strokeWidth="1.500" />
            <rect x="3" y="6" width="15.500" height="20" fill="#5a9a86" stroke="#567" />
            <path d="M3.500 6.500h14.500v5q-8 0-14.500 5z" fill="#4a7ea0" />
            <path d="M21 7h7M21 10h7M21 13h7M21 16h7M21 19h7M21 22h7M21 25h5" stroke="#c4c4c4" />
            <rect x="31" y="6" width="3" height="12" fill="#4f8d9a" />
          </svg>
        </TaskButton>
        <TaskButton>
          <SkypeIcon>
            <circle cx="33" cy="32.500" r="6.500" fill="#f9a414" stroke="#fff" strokeWidth="1" />
            <text x="33" y="36" textAnchor="middle" fontSize="10" fontWeight="700" fontFamily="Open Sans, sans-serif" fill="#222">1</text>
          </SkypeIcon>
        </TaskButton>
        <TaskButton>
          <ZoomLogo size={39} />
        </TaskButton>
      </div>
      <div className="mr-[19px] ml-auto flex items-center text-white">
        <svg width="12" height="8" viewBox="0 0 12 8" className="mr-[17px]">
          <path d="M6 .8 11.500 6.500H.5Z" fill="#f4f4f4" stroke="#6a654c" />
        </svg>
        <svg width="20" height="20" viewBox="0 0 20 20" className="mr-[17px]">
          <rect width="20" height="20" fill="#3a3a3a" />
          <path d="M16 9 9 5 4 4 2 9 4 16 8 18 13 19 16 17M9 12 15 13M1 5 0 12" stroke="#7fe01a" strokeWidth="2" strokeDasharray="2 .7" fill="none" />
        </svg>
        <svg width="19" height="20" viewBox="0 0 19 20" className="mr-[10px]">
          <path d="M1 5H6V9Q6 10.500 4.200 11V19H3V11Q1 10.500 1 9ZM2 1V5M5 1V5" fill="#fff" stroke="#fff" strokeWidth="1" />
          <rect x="9.500" y="2.500" width="8" height="16" rx="1" fill="#75704f" stroke="#fff" strokeWidth="1.600" />
          <path d="M11.500 1H15.500M11 15.800H16" stroke="#fff" strokeWidth="1.800" />
        </svg>
        <svg width="20" height="20" viewBox="0 0 20 20" className="mr-[11px]">
          <path d="M0 6H3V14H0ZM4 6 9.500 1V19L4 14Z" fill="#fff" stroke="#6a654c" strokeWidth=".6" />
          <path d="M12 7q2 3 0 6M14.500 5q3.500 5 0 10M17 3.500q4.500 6.500 0 13" stroke="#eee" strokeWidth="1.400" fill="none" />
        </svg>
        <svg width="16" height="17" viewBox="0 0 16 17" className="mr-[22px]">
          <path d="M1.500 13V16.500M4.700 10.500V16.500M7.900 7.500V16.500M11.100 4.500V16.500M14.300 1V16.500" stroke="#fff" strokeWidth="2.200" />
        </svg>
        <div className="flex w-[66px] flex-col items-center pt-px text-[14.500px] leading-[22px]">
          <Fit w={53}>8:10 AM</Fit>
          <Fit w={66}>12/5/2017</Fit>
        </div>
      </div>
    </div>
  );
}

export default function App() {
  return (
    <div className="relative flex h-[1080px] w-[1920px] flex-col overflow-hidden bg-[#ebebeb] font-['Open_Sans',sans-serif]">
      <MenuBar />
      <TabStrip />
      <NavBar />
      <BookmarksBar />
      <DriveHeader />
      <DriveBody />
      <Taskbar />
      <ZoomWindow />
      <SharingBanner />
    </div>
  );
}
